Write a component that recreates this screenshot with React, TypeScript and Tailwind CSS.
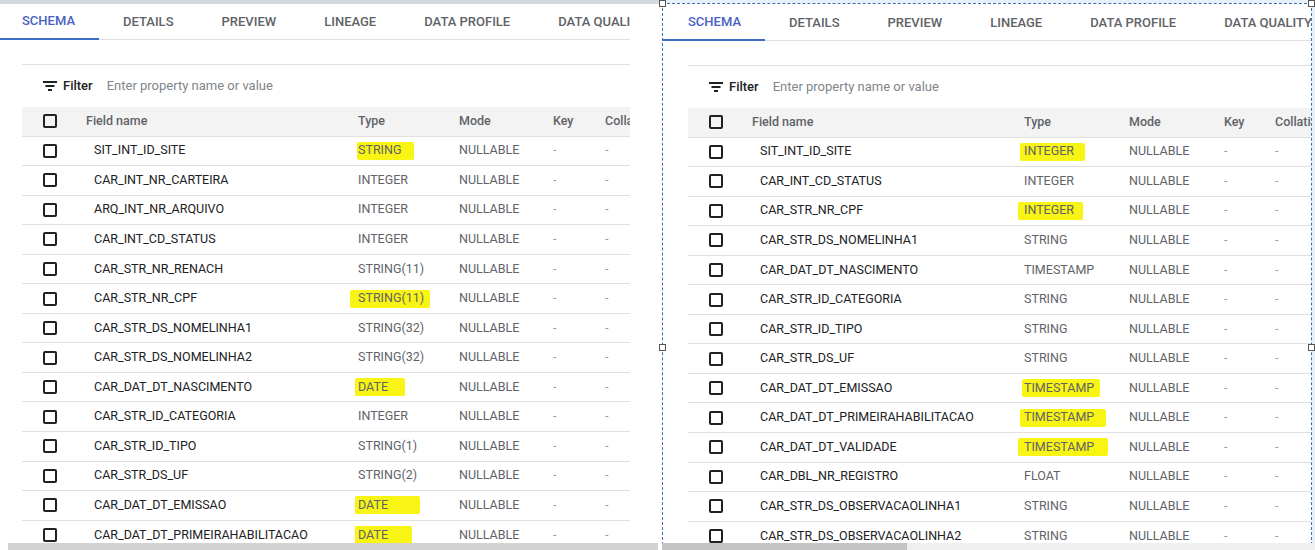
import React from "react";

type Row = { name: string; type: string; hl?: [number, number] };

const leftRows: Row[] = [
  { name: "SIT_INT_ID_SITE", type: "STRING", hl: [-1, 57] },
  { name: "CAR_INT_NR_CARTEIRA", type: "INTEGER" },
  { name: "ARQ_INT_NR_ARQUIVO", type: "INTEGER" },
  { name: "CAR_INT_CD_STATUS", type: "INTEGER" },
  { name: "CAR_STR_NR_RENACH", type: "STRING(11)" },
  { name: "CAR_STR_NR_CPF", type: "STRING(11)", hl: [-8, 80] },
  { name: "CAR_STR_DS_NOMELINHA1", type: "STRING(32)" },
  { name: "CAR_STR_DS_NOMELINHA2", type: "STRING(32)" },
  { name: "CAR_DAT_DT_NASCIMENTO", type: "DATE", hl: [-3, 50] },
  { name: "CAR_STR_ID_CATEGORIA", type: "INTEGER" },
  { name: "CAR_STR_ID_TIPO", type: "STRING(1)" },
  { name: "CAR_STR_DS_UF", type: "STRING(2)" },
  { name: "CAR_DAT_DT_EMISSAO", type: "DATE", hl: [-3, 65] },
  { name: "CAR_DAT_DT_PRIMEIRAHABILITACAO", type: "DATE", hl: [-3, 57] },
];

const rightRows: Row[] = [
  { name: "SIT_INT_ID_SITE", type: "INTEGER", hl: [-4, 65] },
  { name: "CAR_INT_CD_STATUS", type: "INTEGER" },
  { name: "CAR_STR_NR_CPF", type: "INTEGER", hl: [-6, 65] },
  { name: "CAR_STR_DS_NOMELINHA1", type: "STRING" },
  { name: "CAR_DAT_DT_NASCIMENTO", type: "TIMESTAMP" },
  { name: "CAR_STR_ID_CATEGORIA", type: "STRING" },
  { name: "CAR_STR_ID_TIPO", type: "STRING" },
  { name: "CAR_STR_DS_UF", type: "STRING" },
  { name: "CAR_DAT_DT_EMISSAO", type: "TIMESTAMP", hl: [-2, 78] },
  { name: "CAR_DAT_DT_PRIMEIRAHABILITACAO", type: "TIMESTAMP", hl: [-4, 86] },
  { name: "CAR_DAT_DT_VALIDADE", type: "TIMESTAMP", hl: [-6, 90] },
  { name: "CAR_DBL_NR_REGISTRO", type: "FLOAT" },
  { name: "CAR_STR_DS_OBSERVACAOLINHA1", type: "STRING" },
  { name: "CAR_STR_DS_OBSERVACAOLINHA2", type: "STRING" },
];

const tabs = ["SCHEMA", "DETAILS", "PREVIEW", "LINEAGE", "DATA PROFILE", "DATA QUALITY"];

function Checkbox() {
  return <div className="w-[14px] h-[14px] border-2 border-[#202124] rounded-[2px]" />;
}

function FilterIcon() {
  return (
    <svg width="14" height="10" viewBox="0 0 14 10" className="block">
      <rect x="0" y="0" width="14" height="2" fill="#202124" />
      <rect x="2.5" y="4" width="9" height="2" fill="#202124" />
      <rect x="5" y="8" width="4" height="2" fill="#202124" />
    </svg>
  );
}

function Panel({ rows, right }: { rows: Row[]; right?: boolean }) {
  const cols = right
    ? "grid-cols-[64px_272px_105px_95px_51px_1fr]"
    : "grid-cols-[64px_272px_101px_94px_52px_1fr]";
  return (
    <div className="flex flex-col w-[760px]">
      <div className={`flex h-[36px] border-b border-[#e0e0e0] ${right ? "w-[648px]" : "w-[630px]"}`}>
        {tabs.map((t, i) => (
          <div
            key={t}
            className={`shrink-0 h-[36px] flex items-center text-[13px] font-medium px-6 ${
              i === 0 ? "text-[#4a5fc1] border-b-2 border-[#3f6bc4]" : "text-[#5f6368]"
            } ${i === 0 ? (right ? "pl-[25px]" : "pl-[22px]") : ""}`}
          >
            {t}
          </div>
        ))}
      </div>
      <div className={`mt-[24px] border-t border-[#e0e0e0] ${right ? "ml-[25px] w-[623px]" : "ml-[22px] w-[608px]"}`}>
        <div className="h-[42px] flex items-center pl-[21px]">
          <FilterIcon />
          <span className="ml-[6px] text-[13px] font-medium text-[#202124]">Filter</span>
          <span className="ml-[14px] text-[13px] text-[#80868b]">Enter property name or value</span>
        </div>
        <div className={`grid ${cols} h-[29.5px] items-center bg-[#f3f3f3] border-b border-[#e0e0e0] text-[12.5px] font-medium text-[#5f6368]`}>
          <div className="pl-[21px]"><Checkbox /></div>
          <div>Field name</div>
          <div>Type</div>
          <div>Mode</div>
          <div>Key</div>
          <div className="whitespace-nowrap overflow-hidden">Collation</div>
        </div>
        {rows.map((r) => (
          <div
            key={r.name}
            className={`grid ${cols} h-[29.55px] items-center border-b border-[#e0e0e0] text-[12.5px]`}
          >
            <div className="pl-[21px]"><Checkbox /></div>
            <div className="pl-[8px] text-[#202124] whitespace-nowrap">{r.name}</div>
            <div className="relative text-[#5f6368]">
              {r.hl && (
                <span
                  className="absolute top-1/2 -translate-y-1/2 h-[18px] bg-[#f8f414] rounded-[2px]"
                  style={{ left: r.hl[0], width: r.hl[1] }}
                />
              )}
              <span className="relative">{r.type}</span>
            </div>
            <div className="text-[#5f6368]">NULLABLE</div>
            <div className="text-[#9aa0a6]">-</div>
            <div className="text-[#9aa0a6]">-</div>
          </div>
        ))}
      </div>
    </div>
  );
}

function Handle({ cls }: { cls: string }) {
  return <div className={`absolute w-[7px] h-[7px] bg-white border border-[#555] ${cls}`} />;
}

export default function App() {
  return (
    <div
      className="relative w-[1315px] h-[550px] overflow-hidden bg-white flex"
      style={{ fontFamily: "Roboto, 'Liberation Sans', sans-serif" }}
    >
      <div className="w-[662px] shrink-0 flex flex-col">
        <div className="h-[4px] w-[660px] bg-[#d2d8e0]" />
        <div className="w-[630px] overflow-hidden flex-1">
          <Panel rows={leftRows} />
        </div>
      </div>
      <div className="flex-1 flex flex-col bg-[#e6f0f9]">
        <div className="h-[3px]" />
        <div className="relative flex-1 w-[650px] pt-[1px] border border-dashed border-[#3d6fa8] bg-white overflow-hidden">
          <Panel rows={rightRows} right />
        </div>
      </div>
      <Handle cls="left-[659px] top-[0px]" />
      <Handle cls="left-[1308px] top-[0px]" />
      <Handle cls="left-[659px] top-[344px]" />
      <Handle cls="left-[1308px] top-[344px]" />
      <div className="absolute left-0 bottom-0 w-[1315px] h-[7px] flex">
        <div className="w-[8px] bg-white" />
        <div className="w-[650px] bg-[#d3d3d3]" />
        <div className="w-[4px] bg-white" />
        <div className="w-[245px] bg-[#c4c4c4]" />
        <div className="flex-1 bg-[#efefef]" />
      </div>
    </div>
  );
}
